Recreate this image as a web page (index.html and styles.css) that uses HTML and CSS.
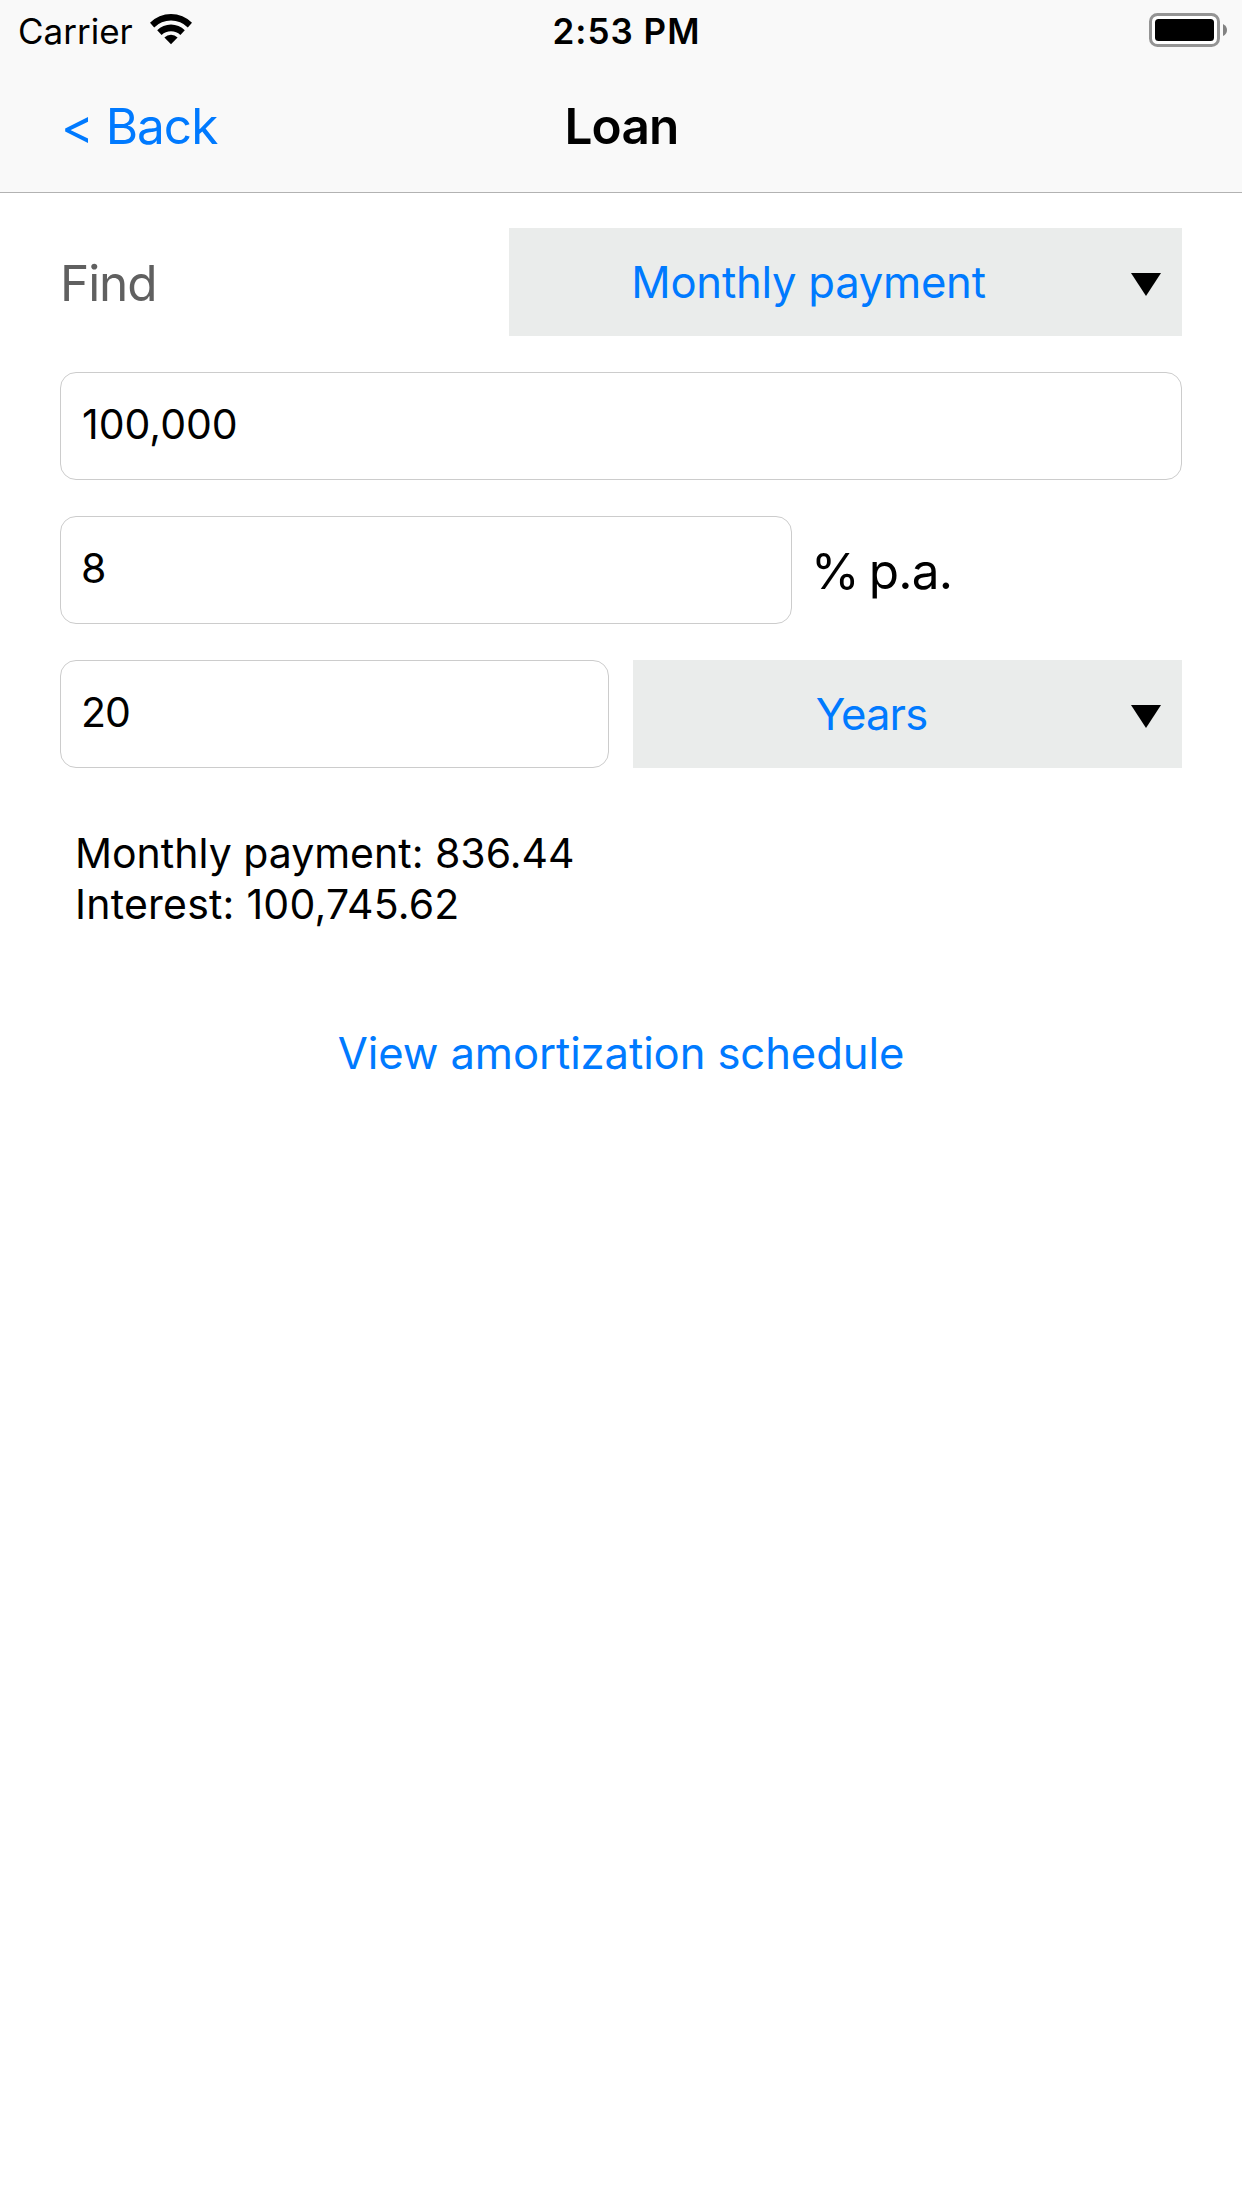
FILE: index.html
```
<!DOCTYPE html>
<html lang="en">
<head>
<meta charset="utf-8">
<title>Loan</title>
<link rel="stylesheet" href="styles.css">
</head>
<body>
<header class="header">
  <div class="status">
    <div class="status-left">
      <span class="carrier">Carrier</span>
      <svg class="wifi" width="42" height="31" viewBox="0 0 42 31">
        <path d="M0 8.8A29.6 29.6 0 0 1 42 8.8L37.8 13.4A24 24 0 0 0 4.2 13.4Z"/>
        <path d="M7.2 16.2A19.4 19.4 0 0 1 34.8 16.2L30.4 20.9A13.6 13.6 0 0 0 11.6 20.9Z"/>
        <path d="M14.4 23.5A9.3 9.3 0 0 1 27.6 23.5L21 30.3Z"/>
      </svg>
    </div>
    <span class="time">2:53 PM</span>
    <svg class="battery" width="78" height="34" viewBox="0 0 78 34">
      <rect x="1.5" y="1.5" width="68" height="31" rx="7" fill="#fff" stroke="#949494" stroke-width="3"/>
      <rect x="6" y="6" width="59" height="22" rx="3.5"/>
      <path d="M74 11Q78 13 78 17Q78 21 74 23Z" fill="#828282"/>
    </svg>
  </div>
  <nav class="nav">
    <a class="back">&lt; Back</a>
    <h1 class="title">Loan</h1>
  </nav>
</header>
<main class="form">
  <div class="row">
    <span class="label">Find</span>
    <div class="select select-find">
      <span class="select-text select-text-find">Monthly payment</span>
      <svg class="arrow" width="30" height="23" viewBox="0 0 30 23"><path d="M0 0H30L15 23Z"/></svg>
    </div>
  </div>
  <div class="row">
    <div class="field">100,000</div>
  </div>
  <div class="row">
    <div class="field field-rate">8</div>
    <span class="unit"><span class="percent">%</span> p.a.</span>
  </div>
  <div class="row">
    <div class="field field-term">20</div>
    <div class="select select-term">
      <span class="select-text select-text-term">Years</span>
      <svg class="arrow" width="30" height="23" viewBox="0 0 30 23"><path d="M0 0H30L15 23Z"/></svg>
    </div>
  </div>
  <div class="results">
    <p class="result">Monthly payment: 836.44</p>
    <p class="result result-interest">Interest: 100,745.62</p>
  </div>
  <a class="schedule">View amortization schedule</a>
</main>
</body>
</html>
```
FILE: styles.css
```
* { box-sizing: border-box; }
body {
  margin: 0;
  min-height: 2208px;
  background: #fff;
  color: #000;
  font-family: Inter, "Liberation Sans", sans-serif;
}
svg { display: block; flex: none; }

.header {
  height: 193px;
  background: #f9f9f9;
  border-bottom: 1px solid #b2b2b2;
}
.status {
  height: 60px;
  padding: 2px 15px 0 18px;
  display: grid;
  grid-template-columns: 1fr auto 1fr;
  align-items: center;
  font-size: 35px;
  line-height: 42px;
}
.status-left { display: flex; align-items: center; gap: 17px; }
.wifi { margin-bottom: 3px; }
.time {
  margin-left: 8px;
  font-weight: 600;
  letter-spacing: 1px;
}
.battery { justify-self: end; margin-bottom: 2px; }
.nav {
  height: 132px;
  padding: 0 60px 0 61px;
  display: grid;
  grid-template-columns: 1fr auto 1fr;
  align-items: center;
  font-size: 49.5px;
  line-height: 60px;
}
.back { color: #007aff; letter-spacing: -1px; }
.title {
  margin: 0;
  font-size: 49.5px;
  font-weight: 600;
  letter-spacing: -0.78px;
}

.form {
  padding: 35px 60px 0;
  display: flex;
  flex-direction: column;
  gap: 36px;
}
.row {
  height: 108px;
  display: flex;
  align-items: center;
  gap: 24px;
}
.label {
  flex: 1;
  padding-top: 2px;
  color: #606060;
  font-size: 49.5px;
  letter-spacing: -1.05px;
}
.field {
  flex: 1;
  height: 108px;
  padding: 0 21px 4px;
  display: flex;
  align-items: center;
  border: 1px solid #ccc;
  border-radius: 16px;
  font-size: 41px;
}
.field-rate { flex: 0 0 732px; padding-left: 20px; }
.field-term { padding-left: 20px; letter-spacing: -1px; }
.unit {
  margin-left: -5px;
  padding-top: 2px;
  font-size: 49.5px;
  letter-spacing: -0.8px;
}
.percent { letter-spacing: -4px; }
.select {
  height: 108px;
  padding-right: 21px;
  display: flex;
  align-items: center;
  background: #eaeceb;
  color: #007aff;
  font-size: 43.6px;
}
.select-find { width: 673px; }
.select-term { width: 549px; }
.select-text { flex: 1; padding-right: 21px; text-align: center; }
.select-text-find { padding-right: 23px; letter-spacing: -0.24px; }
.select-text-term { letter-spacing: -0.89px; }
.arrow { margin-top: 4px; fill: #000; }

.results { padding: 24px 15px 0; font-size: 41px; line-height: 51px; }
.result { margin: 0; }
.result-interest { letter-spacing: 0.22px; }
.schedule {
  margin-top: 62px;
  color: #007aff;
  font-size: 43.6px;
  line-height: 52px;
  letter-spacing: -0.1px;
  text-align: center;
}
```
